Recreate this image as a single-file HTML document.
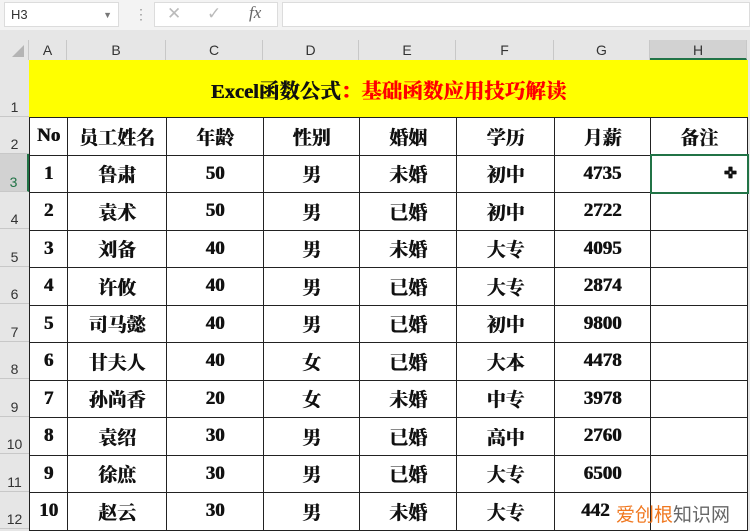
<!DOCTYPE html>
<html><head><meta charset="utf-8"><style>
*{margin:0;padding:0;box-sizing:border-box}
body{width:750px;height:529px;overflow:hidden;background:#e6e6e6;position:relative;font-family:"Liberation Sans",sans-serif}
.abs{position:absolute}
.fb{top:0;left:0;width:750px;height:30px;background:#f3f3f3}
.nb{left:4px;top:2px;width:115px;height:25px;background:#fff;border:1px solid #dcdcdc;font-size:13px;color:#333;padding:4px 6px}
.fx{left:154px;top:2px;width:124px;height:25px;background:#fff;border:1px solid #dcdcdc}
.fi{left:282px;top:2px;width:468px;height:25px;background:#fff;border:1px solid #dcdcdc}
.ch{top:40px;height:20px;background:#e6e6e6;font-size:14px;color:#333;text-align:center;line-height:20px;border-right:1px solid #c8c8c8}
.rh{left:0;width:29px;background:#e6e6e6;font-size:14px;color:#333;text-align:center;border-bottom:1px solid #c8c8c8;display:flex;align-items:flex-end;justify-content:center;padding-bottom:1px}
table{position:absolute;left:29px;top:60px;border-collapse:collapse;table-layout:fixed;font-family:"Liberation Serif","Noto Serif CJK SC",serif;font-weight:bold;font-size:19px;color:#111;text-shadow:0.6px 0 0 currentColor}
td{border:1px solid #222;text-align:center;height:37.5px;padding:0;background:#fff;white-space:nowrap;overflow:hidden}
</style></head><body>
<div class="abs fb"></div>
<div class="abs nb">H3<span style="float:right;font-size:9px;color:#777;margin-top:3px">▼</span></div>
<div class="abs" style="left:134px;top:6px;color:#999;font-size:14px">⋮</div>
<div class="abs fx"><span class="abs" style="left:12px;top:1px;color:#bbb;font-size:17px">✕</span><span class="abs" style="left:52px;top:1px;color:#bbb;font-size:17px">✓</span><span class="abs" style="left:94px;top:0px;color:#666;font-size:17px;font-family:'Liberation Serif',serif;font-style:italic">fx</span></div>
<div class="abs fi"></div>
<div class="abs" style="left:0;top:40px;width:29px;height:20px;background:#e6e6e6;border-right:1px solid #c8c8c8"><div style="position:absolute;right:4px;bottom:3px;width:0;height:0;border-left:12px solid transparent;border-bottom:12px solid #b4b4b4"></div></div>
<div class="abs ch" style="left:29px;width:38px">A</div>
<div class="abs ch" style="left:67px;width:99px">B</div>
<div class="abs ch" style="left:166px;width:97px">C</div>
<div class="abs ch" style="left:263px;width:96px">D</div>
<div class="abs ch" style="left:359px;width:97px">E</div>
<div class="abs ch" style="left:456px;width:98px">F</div>
<div class="abs ch" style="left:554px;width:96px">G</div>
<div class="abs ch" style="left:650px;width:97px;background:#d2d2d2;border-bottom:2px solid #217346">H</div>
<div class="abs rh" style="top:60px;height:57px">1</div>
<div class="abs rh" style="top:117px;height:37px">2</div>
<div class="abs rh" style="top:154px;height:38px;background:#d2d2d2;color:#217346;border-right:2px solid #217346">3</div>
<div class="abs rh" style="top:192px;height:37px">4</div>
<div class="abs rh" style="top:229px;height:38px">5</div>
<div class="abs rh" style="top:267px;height:37px">6</div>
<div class="abs rh" style="top:304px;height:38px">7</div>
<div class="abs rh" style="top:342px;height:37px">8</div>
<div class="abs rh" style="top:379px;height:38px">9</div>
<div class="abs rh" style="top:417px;height:37px">10</div>
<div class="abs rh" style="top:454px;height:38px">11</div>
<div class="abs rh" style="top:492px;height:37px">12</div>
<table>
<colgroup><col style="width:38px"><col style="width:99px"><col style="width:97px"><col style="width:96px"><col style="width:97px"><col style="width:98px"><col style="width:96px"><col style="width:97px"></colgroup>
<tr><td colspan="8" style="height:57px;background:#ffff00;border-color:#ffff00;border-bottom-color:#222;font-size:20.5px">Excel函数公式<span style="color:#f00">：基础函数应用技巧解读</span></td></tr>
<tr><td>No</td><td>员工姓名</td><td>年龄</td><td>性别</td><td>婚姻</td><td>学历</td><td>月薪</td><td>备注</td></tr>
<tr><td>1</td><td>鲁肃</td><td>50</td><td>男</td><td>未婚</td><td>初中</td><td>4735</td><td style="border:2px solid #217346;text-align:right;padding-right:10px;font-size:15px">✜</td></tr>
<tr><td>2</td><td>袁术</td><td>50</td><td>男</td><td>已婚</td><td>初中</td><td>2722</td><td></td></tr>
<tr><td>3</td><td>刘备</td><td>40</td><td>男</td><td>未婚</td><td>大专</td><td>4095</td><td></td></tr>
<tr><td>4</td><td>许攸</td><td>40</td><td>男</td><td>已婚</td><td>大专</td><td>2874</td><td></td></tr>
<tr><td>5</td><td>司马懿</td><td>40</td><td>男</td><td>已婚</td><td>初中</td><td>9800</td><td></td></tr>
<tr><td>6</td><td>甘夫人</td><td>40</td><td>女</td><td>已婚</td><td>大本</td><td>4478</td><td></td></tr>
<tr><td>7</td><td>孙尚香</td><td>20</td><td>女</td><td>未婚</td><td>中专</td><td>3978</td><td></td></tr>
<tr><td>8</td><td>袁绍</td><td>30</td><td>男</td><td>已婚</td><td>高中</td><td>2760</td><td></td></tr>
<tr><td>9</td><td>徐庶</td><td>30</td><td>男</td><td>已婚</td><td>大专</td><td>6500</td><td></td></tr>
<tr><td>10</td><td>赵云</td><td>30</td><td>男</td><td>未婚</td><td>大专</td><td style="overflow:visible;text-align:left;padding-left:26px">442</td><td></td></tr>
</table>
<div class="abs" style="left:616px;top:500px;font-family:'Noto Sans CJK SC',sans-serif;font-size:19px;color:#f07820">爱创根<span style="color:#666">知识网</span></div>
</body></html>
